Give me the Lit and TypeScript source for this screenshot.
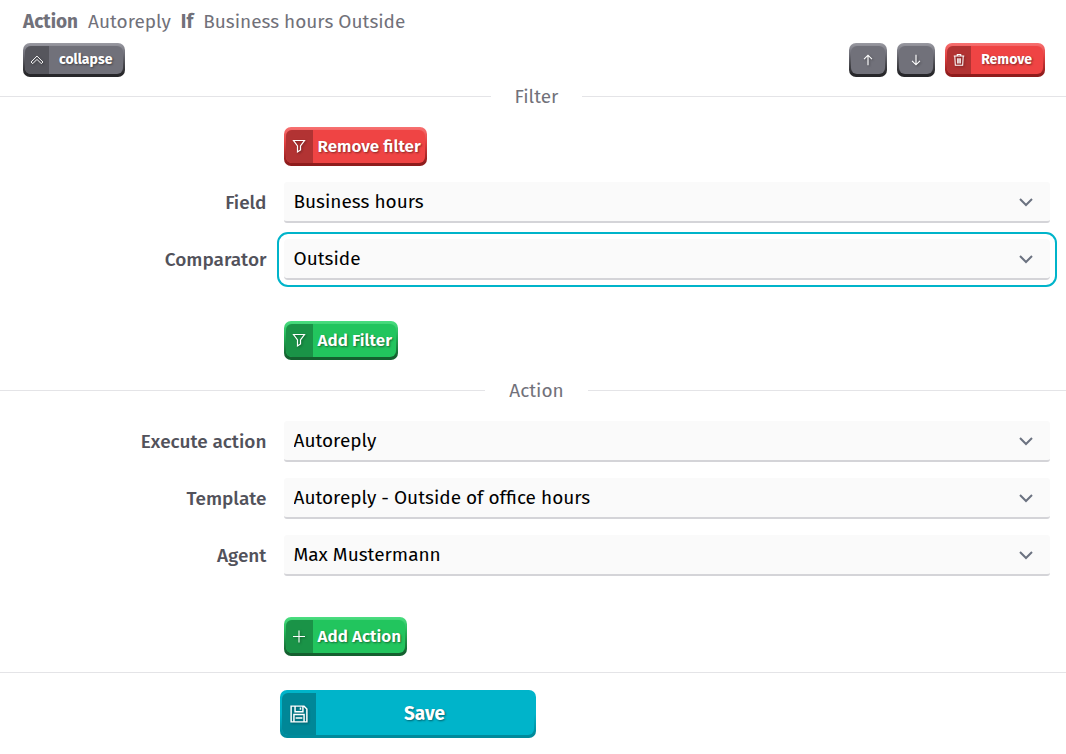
import { LitElement, html, css, svg, nothing } from "lit";
import { customElement, property } from "lit/decorators.js";

const icons: Record<string, unknown> = {
  collapse: svg`<path d="M1.200 10.300 8 3.500l6.800 6.800-1.900 1.900L8 7.300l-4.900 4.900z" stroke-width="1.100"/>`,
  up: svg`<path d="M8 14V2.500M3.500 7 8 2.500 12.500 7" stroke-width="1.300"/>`,
  down: svg`<path d="M8 2v11.500M3.500 9 8 13.500 12.500 9" stroke-width="1.300"/>`,
  trash: svg`<path d="M2 3.500h12M6 3.300V1.700h4v1.600M3.200 4l.6 10h8.400l.6-10M6.500 6v6M8 6v6M9.500 6v6" stroke-width="1.200"/>`,
  filter: svg`<path d="M2.500 1.500h11L9.500 7v4l-3 2V7z" stroke-width="1.200"/>`,
  plus: svg`<path d="M8 1.500v12M2 7.500h12" stroke-width="1.100"/>`,
  save: svg`<path d="M1 1h11.500L15 3.500V15H1zM4.500 1v5h7V1M9.300 2.200v2M3.500 15V8.500h9V15M5 11.500h6" stroke-width="1.300"/>`,
};

@customElement("push-button")
export class PushButton extends LitElement {
  @property() icon = "";
  @property() label = "";
  @property() tone = "gray";
  @property() size = "small";
  @property({ type: Boolean }) bare = false;

  static styles = css`
    :host {
      display: inline-flex;
    }
    .button {
      display: flex;
      width: 100%;
      margin: 0;
      padding: 3px 2px;
      border: 0;
      border-radius: 7px;
      font-family: "Fira Sans", Roboto, sans-serif;
      font-weight: 600;
      color: #fff;
      text-shadow: 1px 1px 2px rgb(0 0 0 / 45%);
      cursor: pointer;
    }
    .gray {
      --face: #71717a;
      --side: #56565d;
      background: linear-gradient(#9a9aa2, #71717a 30%, #27272a 90%);
    }
    .red {
      --face: #ef4444;
      --side: #b23333;
      background: linear-gradient(#f87171, #e04040 40%, #8f1c1c 92%);
    }
    .green {
      --face: #22c55e;
      --side: #1a9347;
      background: linear-gradient(#4ade80, #22b055 40%, #14602f 92%);
    }
    .cyan {
      --face: #00b4ca;
      --side: #008797;
      background: linear-gradient(#00b4ca 50%, #008a9b 92%);
    }
    .face {
      display: flex;
      flex: 1;
      align-items: stretch;
      overflow: hidden;
      border-radius: 6px;
      background: var(--face);
    }
    .icon {
      display: flex;
      align-items: center;
      justify-content: center;
      background: var(--side);
    }
    .bare .icon {
      background: none;
    }
    .glyph {
      fill: none;
      stroke: #fff;
      filter: drop-shadow(1px 1px 1px rgb(0 0 0 / 35%));
    }
    .text {
      flex: 1;
      text-align: center;
      white-space: nowrap;
    }
    .small {
      font-size: 14px;
      font-weight: 700;
      line-height: 28px;
    }
    .small .icon {
      width: 24px;
      height: 28px;
    }
    .small.bare .icon {
      width: 34px;
    }
    .small .glyph {
      width: 14px;
      height: 14px;
    }
    .small .text {
      padding: 0 11px 0 10px;
    }
    .medium {
      font-size: 17px;
      line-height: 33px;
    }
    .medium .icon {
      width: 27px;
    }
    .medium .glyph {
      width: 16px;
      height: 16px;
    }
    .medium .text {
      padding: 0 4px 0 5px;
    }
    .large {
      font-size: 19px;
      font-weight: 700;
      line-height: 42px;
    }
    .large .icon {
      width: 34px;
    }
    .large .glyph {
      width: 18px;
      height: 18px;
    }
  `;

  render() {
    return html`<button
      type="button"
      class="button ${this.tone} ${this.size} ${this.bare ? "bare" : ""}"
      aria-label=${this.label}
    >
      <span class="face">
        <span class="icon"><svg class="glyph" viewBox="0 0 16 16" aria-hidden="true">${icons[this.icon]}</svg></span>
        ${this.bare ? nothing : html`<span class="text">${this.label}</span>`}
      </span>
    </button>`;
  }
}

interface Field {
  id: string;
  label: string;
  value: string;
  active?: boolean;
}

const filterFields: Field[] = [
  { id: "field", label: "Field", value: "Business hours" },
  { id: "comparator", label: "Comparator", value: "Outside", active: true },
];

const actionFields: Field[] = [
  { id: "execute", label: "Execute action", value: "Autoreply" },
  { id: "template", label: "Template", value: "Autoreply - Outside of office hours" },
  { id: "agent", label: "Agent", value: "Max Mustermann" },
];

@customElement("app-root")
export class AppRoot extends LitElement {
  static styles = css`
    :host {
      display: block;
      background: #fff;
      color: #71717a;
      font-family: "Fira Sans", Roboto, sans-serif;
      font-size: 19px;
      line-height: 28px;
    }
    .header {
      padding: 8px 21px 0 23px;
    }
    .summary {
      display: flex;
      gap: 10px;
    }
    .toolbar {
      display: flex;
      gap: 10px;
      margin-top: 7px;
    }
    .first {
      margin-right: auto;
    }
    .divider {
      display: flex;
      align-items: center;
      gap: 24px;
      height: 29px;
      margin-top: 5px;
    }
    .divider::before,
    .divider::after {
      content: "";
      flex: 1 1 0;
      height: 1px;
      background: #e4e4e7;
    }
    .divider::before {
      flex-basis: 7px;
    }
    .second {
      margin-top: 16px;
    }
    .rows {
      display: grid;
      gap: 16px;
      padding-top: 16px;
    }
    .row {
      display: grid;
      grid-template-columns: 1fr 3fr;
      align-items: center;
    }
    .label {
      text-align: right;
      font-weight: 500;
      color: #52525b;
    }
    .cell {
      grid-column: 2;
      display: grid;
      align-items: center;
      padding: 0 16px 0 17px;
    }
    .select,
    .chevron {
      grid-area: 1 / 1;
    }
    .select {
      appearance: none;
      width: 100%;
      height: 41px;
      margin: 0;
      padding: 0 40px 0 10px;
      border: 0;
      border-bottom: 2px solid #d4d4d8;
      border-radius: 3px;
      background: #fafafa;
      color: #000;
      font: inherit;
    }
    .select:focus-visible,
    .active {
      outline: 2px solid #00b4ca;
      outline-offset: 5px;
      border-radius: 4px;
    }
    .chevron {
      justify-self: end;
      width: 16px;
      height: 16px;
      margin-right: 16px;
      fill: none;
      stroke: #6b7280;
      stroke-width: 2;
      pointer-events: none;
    }
    .before {
      padding-top: 16px;
    }
    .after {
      padding-top: 41px;
    }
    .left {
      justify-items: start;
    }
    .footer {
      margin-top: 16px;
      padding: 17px 0 16px;
      border-top: 1px solid #e4e4e7;
    }
    .submit {
      padding: 0 13px;
    }
    .save {
      width: 256px;
      max-width: 100%;
    }
  `;

  private row(f: Field) {
    return html`<div class="row">
      <label class="label" for=${f.id}>${f.label}</label>
      <div class="cell">
        <select id=${f.id} class="select ${f.active ? "active" : ""}">
          <option selected>${f.value}</option>
        </select>
        <svg class="chevron" viewBox="0 0 16 16" aria-hidden="true">
          <path d="M2 4l6 6 6-6" />
        </svg>
      </div>
    </div>`;
  }

  render() {
    return html`
      <header class="header">
        <div class="summary"><b>Action</b><span>Autoreply</span><b>If</b><span>Business hours Outside</span></div>
        <div class="toolbar">
          <push-button class="first" icon="collapse" label="collapse"></push-button>
          <push-button bare icon="up" label="Move up"></push-button>
          <push-button bare icon="down" label="Move down"></push-button>
          <push-button tone="red" icon="trash" label="Remove"></push-button>
        </div>
      </header>
      <div class="divider">Filter</div>
      <div class="row before">
        <div class="cell left">
          <push-button tone="red" size="medium" icon="filter" label="Remove filter"></push-button>
        </div>
      </div>
      <div class="rows">${filterFields.map((f) => this.row(f))}</div>
      <div class="row after">
        <div class="cell left">
          <push-button tone="green" size="medium" icon="filter" label="Add Filter"></push-button>
        </div>
      </div>
      <div class="divider second">Action</div>
      <div class="rows">${actionFields.map((f) => this.row(f))}</div>
      <div class="row after">
        <div class="cell left">
          <push-button tone="green" size="medium" icon="plus" label="Add Action"></push-button>
        </div>
      </div>
      <footer class="footer">
        <div class="row">
          <div class="cell left submit">
            <push-button class="save" tone="cyan" size="large" icon="save" label="Save"></push-button>
          </div>
        </div>
      </footer>
    `;
  }
}
